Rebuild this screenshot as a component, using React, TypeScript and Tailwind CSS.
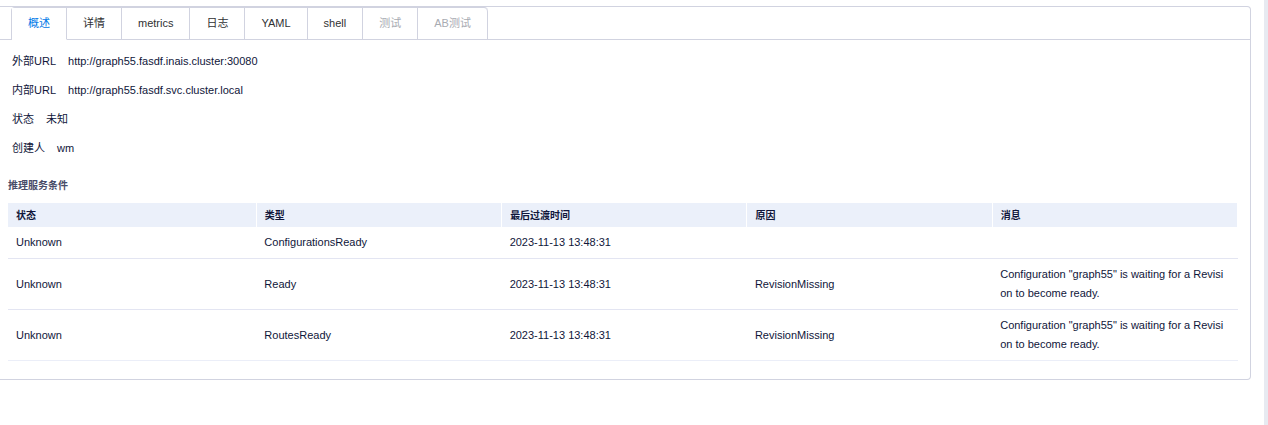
import { useState } from 'react';

const tabs = [
  { name: '概述' },
  { name: '详情' },
  { name: 'metrics' },
  { name: '日志' },
  { name: 'YAML' },
  { name: 'shell' },
  { name: '测试', disabled: true },
  { name: 'AB测试', disabled: true },
];

const details = [
  { label: '外部URL', value: 'http://graph55.fasdf.inais.cluster:30080' },
  { label: '内部URL', value: 'http://graph55.fasdf.svc.cluster.local' },
  { label: '状态', value: '未知' },
  { label: '创建人', value: 'wm' },
];

const columns = ['状态', '类型', '最后过渡时间', '原因', '消息'];

const waiting = 'Configuration "graph55" is waiting for a Revision to become ready.';

const conditions = [
  ['Unknown', 'ConfigurationsReady', '2023-11-13 13:48:31', '', ''],
  ['Unknown', 'Ready', '2023-11-13 13:48:31', 'RevisionMissing', waiting],
  ['Unknown', 'RoutesReady', '2023-11-13 13:48:31', 'RevisionMissing', waiting],
];

function TabBar({ active, onSelect }: { active: string; onSelect: (name: string) => void }) {
  return (
    <div className="flex border-b border-[#d1d3e0] pl-[11px]">
      <div role="tablist" className="-mb-px flex rounded-t border-t border-l border-[#d1d3e0]">
        {tabs.map((tab) => (
          <button
            key={tab.name}
            type="button"
            role="tab"
            disabled={tab.disabled}
            aria-selected={tab.name === active}
            onClick={() => onSelect(tab.name)}
            className={
              'h-8 border-r border-b border-r-[#d1d3e0] px-4 whitespace-nowrap last:rounded-tr ' +
              (tab.name === active
                ? 'border-b-white bg-white text-[#0078e7]'
                : 'border-b-[#d1d3e0] text-[#303133] disabled:text-[#a8abb2]')
            }
          >
            {tab.name}
          </button>
        ))}
      </div>
    </div>
  );
}

export default function App() {
  const [active, setActive] = useState('概述');

  return (
    <div className="flex min-h-screen bg-white font-['Liberation_Sans','Noto_Sans_CJK_SC',sans-serif] text-[11px] text-[#10163a]">
      <main className="min-w-0 flex-1 pt-[6px] pr-[13px]">
        <section className="rounded-r border-y border-r border-[#d1d3e0]">
          <TabBar active={active} onSelect={setActive} />
          <div className="pr-3 pb-[18px] pl-2">
            <dl className="pt-[7px] pl-1">
              {details.map((item) => (
                <div key={item.label} className="flex h-[29px] items-center gap-3">
                  <dt>{item.label}</dt>
                  <dd>{item.value}</dd>
                </div>
              ))}
            </dl>
            <h2 className="mt-[13px] text-[10px] leading-5 font-bold text-[#484c68]">推理服务条件</h2>
            <table className="mt-[7px] w-full table-fixed border-collapse text-left">
              <colgroup>
                <col className="w-[20.2%]" />
                <col />
                <col />
                <col />
                <col />
              </colgroup>
              <thead>
                <tr className="bg-[#ebf0fa] text-[10px]">
                  {columns.map((name) => (
                    <th key={name} scope="col" className="h-6 border-r border-white px-2 py-0 font-bold">
                      {name}
                    </th>
                  ))}
                </tr>
              </thead>
              <tbody>
                {conditions.map((row) => (
                  <tr key={row[1]} className="border-b border-[#e3e5f2] last:border-[#ebeef8]">
                    {row.map((cell, i) => (
                      <td key={columns[i]} className="py-[6px] pr-3 pl-2 leading-[19px] break-all">
                        {cell}
                      </td>
                    ))}
                  </tr>
                ))}
              </tbody>
            </table>
          </div>
        </section>
      </main>
      <div className="w-1 bg-[#e7eaf1]" />
    </div>
  );
}
